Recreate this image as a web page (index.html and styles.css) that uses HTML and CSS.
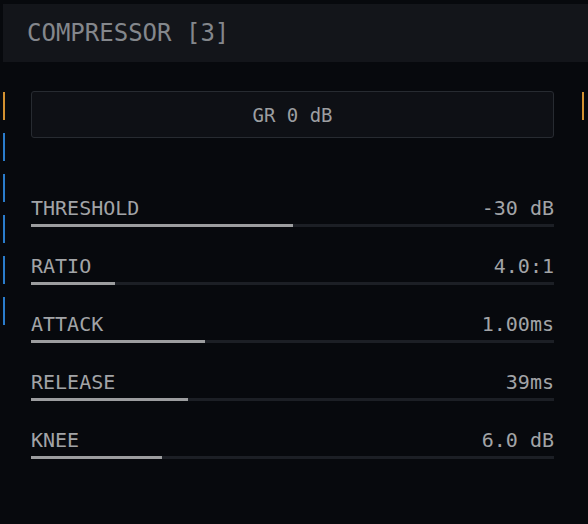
FILE: index.html
```html
<!DOCTYPE html>
<html>
<head>
<meta charset="utf-8">
<link rel="stylesheet" href="styles.css">
</head>
<body>
<div class="header">COMPRESSOR [3]</div>
<div class="main">
  <div class="rail">
    <span class="mark orange"></span>
    <span class="mark blue"></span>
    <span class="mark blue"></span>
    <span class="mark blue"></span>
    <span class="mark blue"></span>
    <span class="mark blue"></span>
  </div>
  <div class="content">
    <div class="gr">GR 0 dB</div>
    <div class="params">
      <div class="param">
        <div class="row"><span>THRESHOLD</span><span>-30 dB</span></div>
        <div class="track"><div class="fill" style="width:50%"></div></div>
      </div>
      <div class="param">
        <div class="row"><span>RATIO</span><span>4.0:1</span></div>
        <div class="track"><div class="fill" style="width:16%"></div></div>
      </div>
      <div class="param">
        <div class="row"><span>ATTACK</span><span>1.00ms</span></div>
        <div class="track"><div class="fill" style="width:33.3%"></div></div>
      </div>
      <div class="param">
        <div class="row"><span>RELEASE</span><span>39ms</span></div>
        <div class="track"><div class="fill" style="width:30%"></div></div>
      </div>
      <div class="param">
        <div class="row"><span>KNEE</span><span>6.0 dB</span></div>
        <div class="track"><div class="fill" style="width:25%"></div></div>
      </div>
    </div>
  </div>
  <div class="rail right">
    <span class="mark orange"></span>
  </div>
</div>
</body>
</html>
```
FILE: styles.css
```css
html, body {
  margin: 0;
  padding: 0;
  background: #07090d;
  width: 588px;
  height: 524px;
  overflow: hidden;
  font-family: "DejaVu Sans Mono", "Liberation Mono", monospace;
}

.header {
  margin: 4px 0 0 3px;
  height: 58px;
  background: #13151a;
  padding-left: 24px;
  display: flex;
  align-items: center;
  font-size: 24px;
  color: #84878c;
  letter-spacing: 0;
}

.main {
  display: flex;
  margin-top: 30px;
}

.rail {
  display: flex;
  flex-direction: column;
  gap: 13px;
  margin-left: 3px;
  width: 2px;
}

.rail.right {
  margin-left: 28px;
}

.mark {
  display: block;
  width: 2px;
  height: 28px;
}

.mark.orange { background: #d39130; }
.mark.blue { background: #2a7ccc; }

.content {
  margin-left: 26px;
  width: 523px;
}

.gr {
  height: 45px;
  border: 1px solid #272b31;
  border-radius: 3px;
  background: #0e1015;
  display: flex;
  align-items: center;
  justify-content: center;
  font-size: 19px;
  color: #9c9ea1;
  margin-top: -1px;
}

.params {
  margin-top: 60px;
  display: flex;
  flex-direction: column;
  gap: 29px;
}

.param {
  display: flex;
  flex-direction: column;
  gap: 6px;
}

.row {
  display: flex;
  justify-content: space-between;
  font-size: 20px;
  line-height: 20px;
  color: #a2a4a7;
}

.track {
  height: 3px;
  background: #1c1f25;
}

.fill {
  height: 3px;
  background: #9c9d9f;
}
```
